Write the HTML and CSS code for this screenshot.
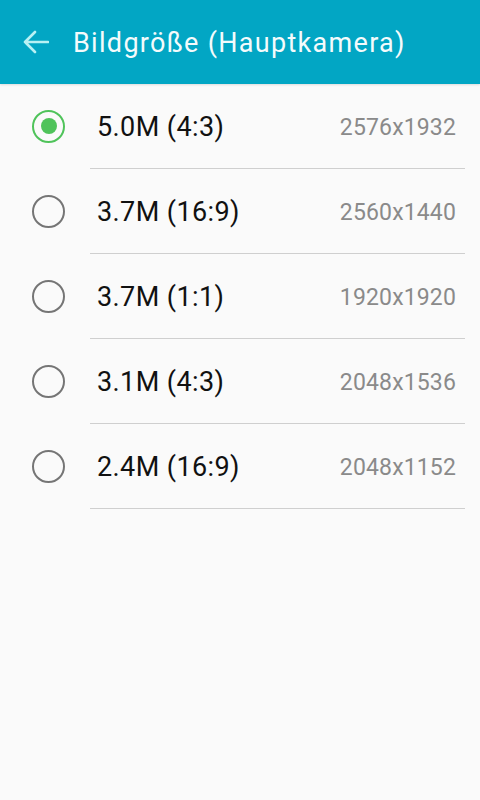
FILE: index.html
```html
<!DOCTYPE html>
<html lang="de">
<head>
<meta charset="utf-8">
<link rel="stylesheet" href="styles.css">
</head>
<body>
<header class="appbar">
  <svg class="back" width="26" height="24" viewBox="0 0 26 24">
    <path d="M2 12 H25 M12 2 L2 12 L12 22" fill="none" stroke="#b8f1f4" stroke-width="2.6" stroke-linecap="round" stroke-linejoin="round"/>
  </svg>
  <h1 class="title">Bildgröße (Hauptkamera)</h1>
</header>
<ul class="list">
  <li class="row"><span class="radio checked"></span><span class="label">5.0M (4:3)</span><span class="res">2576x1932</span></li>
  <li class="row"><span class="radio"></span><span class="label">3.7M (16:9)</span><span class="res">2560x1440</span></li>
  <li class="row"><span class="radio"></span><span class="label">3.7M (1:1)</span><span class="res">1920x1920</span></li>
  <li class="row"><span class="radio"></span><span class="label">3.1M (4:3)</span><span class="res">2048x1536</span></li>
  <li class="row"><span class="radio"></span><span class="label">2.4M (16:9)</span><span class="res">2048x1152</span></li>
</ul>
</body>
</html>
```
FILE: styles.css
```css
html, body {
  margin: 0;
  padding: 0;
  background: #fafafa;
  font-family: Roboto, "Noto Sans", sans-serif;
  width: 480px;
  height: 800px;
  overflow: hidden;
}
.appbar {
  height: 84px;
  background: #02a6c4;
  display: flex;
  align-items: center;
  box-shadow: 0 1px 2px rgba(0,0,0,0.12);
  position: relative;
}
.back {
  margin-left: 23px;
  flex: none;
}
.title {
  margin: 0 0 0 24px;
  font-weight: 400;
  font-size: 27px;
  letter-spacing: 1.3px;
  color: #f4fbfc;
  padding-top: 1px;
}
.list {
  list-style: none;
  margin: 0;
  padding: 0;
}
.row {
  display: flex;
  align-items: center;
  height: 84px;
  background-image: linear-gradient(#cfcfcf, #cfcfcf);
  background-repeat: no-repeat;
  background-size: 375px 1px;
  background-position: 90px 100%;
  padding-bottom: 1px;
  box-sizing: content-box;
}
.radio {
  flex: none;
  box-sizing: border-box;
  width: 33px;
  height: 33px;
  border-radius: 50%;
  border: 2.5px solid #757575;
  margin-left: 32px;
  margin-right: 32px;
  display: flex;
  align-items: center;
  justify-content: center;
}
.radio.checked {
  border-color: #4fc35a;
}
.radio.checked::after {
  content: "";
  width: 16px;
  height: 16px;
  border-radius: 50%;
  background: #4fc35a;
}
.label {
  font-size: 27px;
  letter-spacing: 0.4px;
  color: #111;
  flex: 1;
  padding-top: 2px;
}
.res {
  font-size: 23px;
  letter-spacing: 0.15px;
  color: #8a8a8a;
  margin-right: 24px;
  padding-top: 2px;
}
```
